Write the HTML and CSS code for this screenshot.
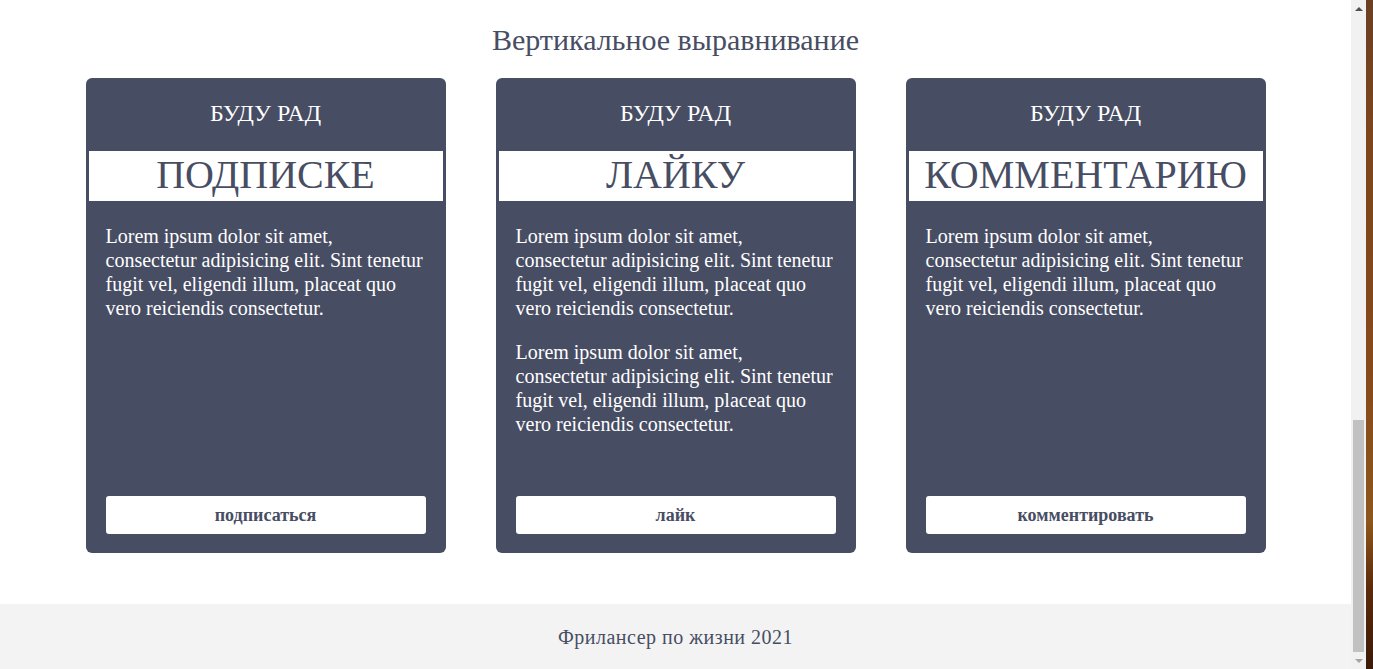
FILE: index.html
```html
<!DOCTYPE html>
<html lang="ru">
<head>
<meta charset="utf-8">
<title>Вертикальное выравнивание</title>
<link rel="stylesheet" href="styles.css">
</head>
<body>
<div class="window">
  <div class="page">
    <main class="section">
      <h2 class="section-title">Вертикальное выравнивание</h2>
      <div class="cards">
        <div class="card">
          <div class="card-top">БУДУ РАД</div>
          <div class="card-band">ПОДПИСКЕ</div>
          <div class="card-body">
            <p>Lorem ipsum dolor sit amet, consectetur adipisicing elit. Sint tenetur fugit vel, eligendi illum, placeat quo vero reiciendis consectetur.</p>
          </div>
          <div class="card-foot"><button class="card-btn">подписаться</button></div>
        </div>
        <div class="card">
          <div class="card-top">БУДУ РАД</div>
          <div class="card-band">ЛАЙКУ</div>
          <div class="card-body">
            <p>Lorem ipsum dolor sit amet, consectetur adipisicing elit. Sint tenetur fugit vel, eligendi illum, placeat quo vero reiciendis consectetur.</p>
            <p>Lorem ipsum dolor sit amet, consectetur adipisicing elit. Sint tenetur fugit vel, eligendi illum, placeat quo vero reiciendis consectetur.</p>
          </div>
          <div class="card-foot"><button class="card-btn">лайк</button></div>
        </div>
        <div class="card">
          <div class="card-top">БУДУ РАД</div>
          <div class="card-band">КОММЕНТАРИЮ</div>
          <div class="card-body">
            <p>Lorem ipsum dolor sit amet, consectetur adipisicing elit. Sint tenetur fugit vel, eligendi illum, placeat quo vero reiciendis consectetur.</p>
          </div>
          <div class="card-foot"><button class="card-btn">комментировать</button></div>
        </div>
      </div>
    </main>
    <footer class="footer">Фрилансер по жизни 2021</footer>
  </div>
  <div class="scrollbar">
    <div class="sb-arrow sb-up"></div>
    <div class="sb-track"><div class="sb-thumb"></div></div>
    <div class="sb-arrow sb-down"></div>
  </div>
  <div class="edge"></div>
</div>
</body>
</html>
```

FILE: styles.css
```css
html, body {
  margin: 0;
  padding: 0;
  height: 669px;
  overflow: hidden;
  background: #ffffff;
}

body {
  font-family: "Liberation Serif", "Times New Roman", serif;
  color: #474d63;
}

.window {
  display: flex;
  height: 669px;
}

.page {
  flex: 1;
  display: flex;
  flex-direction: column;
  min-width: 0;
}

.section {
  padding-top: 24px;
  flex: 0 0 auto;
}

.section-title {
  margin: 0 0 22px;
  font-weight: normal;
  font-size: 30px;
  line-height: 32px;
  text-align: center;
  color: #474d63;
}

.cards {
  display: flex;
  justify-content: center;
  gap: 50px;
}

.card {
  width: 360px;
  height: 475px;
  box-sizing: border-box;
  background: #474d63;
  border-radius: 6px;
  padding: 0 3px;
  display: flex;
  flex-direction: column;
  color: #ffffff;
}

.card-top {
  font-size: 24px;
  line-height: 70px;
  padding-bottom: 3px;
  text-align: center;
}

.card-band {
  background: #ffffff;
  color: #474d63;
  height: 50px;
  font-size: 40px;
  line-height: 48px;
  text-align: center;
  white-space: nowrap;
}

.card-body {
  flex: 1;
  padding: 23px 17px 0;
}

.card-body p {
  margin: 0 0 20px;
  font-size: 20px;
  line-height: 24px;
}

.card-foot {
  padding: 0 17px 19px;
}

.card-btn {
  display: block;
  width: 100%;
  height: 38px;
  border: 0;
  border-radius: 3px;
  background: #ffffff;
  color: #474d63;
  font-family: "Liberation Serif", "Times New Roman", serif;
  font-weight: bold;
  font-size: 18px;
  padding: 0;
}

.footer {
  margin-top: 51px;
  flex: 1;
  background: #f3f3f3;
  text-align: center;
  font-size: 20px;
  letter-spacing: 0.5px;
  line-height: 22px;
  padding-top: 22px;
  color: #474d63;
}

.scrollbar {
  width: 15px;
  background: #f1f1f1;
  display: flex;
  flex-direction: column;
  align-items: center;
}

.sb-arrow {
  height: 17px;
  width: 15px;
  display: flex;
  align-items: center;
  justify-content: center;
}

.sb-up::before {
  content: "";
  border-left: 4px solid transparent;
  border-right: 4px solid transparent;
  border-bottom: 4px solid #505050;
}

.sb-down::before {
  content: "";
  border-left: 4px solid transparent;
  border-right: 4px solid transparent;
  border-top: 4px solid #a3a3a3;
}

.sb-track {
  flex: 1;
  width: 15px;
  display: flex;
  flex-direction: column;
  justify-content: flex-end;
  align-items: center;
}

.sb-thumb {
  width: 11px;
  height: 232px;
  background: #c1c1c1;
}

.edge {
  width: 7px;
  background: linear-gradient(to bottom, #6a3f22 0%, #7c451c 20%, #86491a 55%, #8d561c 78%, #5a2a0a 88%, #3b1a08 100%);
}
```
